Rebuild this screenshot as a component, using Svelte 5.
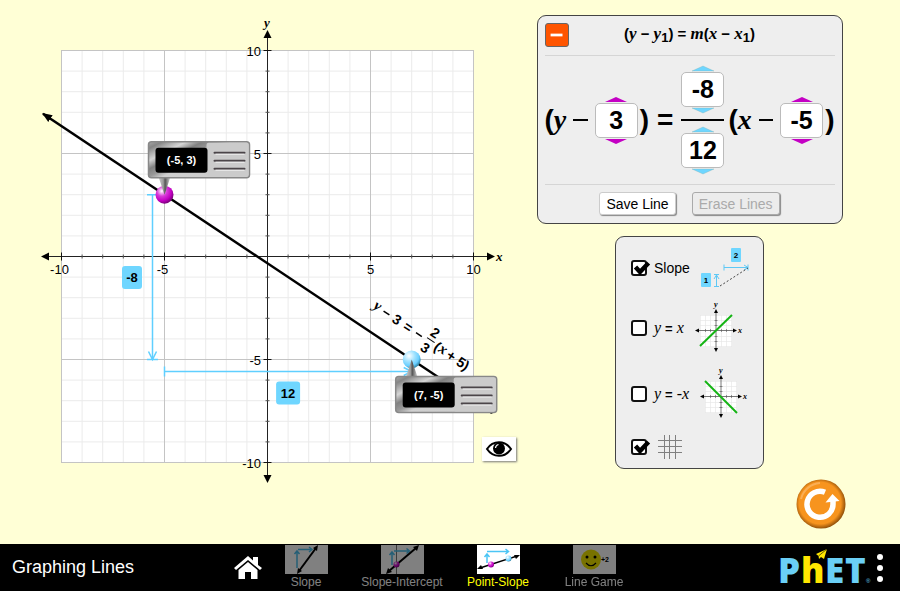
<script>
	let x1 = $state(-5);
	let y1 = $state(3);
	let rise = $state(-8);
	let run = $state(12);
	let savedLines = $state([]);
	let expanded = $state(true);
	let linesVisible = $state(true);
	let activeScreen = $state('Point-Slope');

	let showSlope = $state(true);
	let showYX = $state(false);
	let showYNegX = $state(false);
	let showGrid = $state(true);

	const UNIT = 20.6;
	const EXTENT = 10.9;
	const ticks = Array.from({ length: 21 }, (_, i) => i - 10);
	const screens = ['Slope', 'Slope-Intercept', 'Point-Slope', 'Line Game'];

	// Model to view coordinates
	const px = (x) => 267.5 + x * UNIT;
	const py = (y) => 256.5 - y * UNIT;

	function gcd(a, b) {
		return b === 0 ? Math.abs(a) || 1 : gcd(b, a % b);
	}

	// Ends of a line, where it leaves the square just outside the grid
	function lineEnds(x, y, dx, dy) {
		if (dx === 0 && dy === 0) return null;
		const limit = (p, d, sign) => (d === 0 ? sign * Infinity : (sign * Math.sign(d) * EXTENT - p) / d);
		const far = Math.min(limit(x, dx, 1), limit(y, dy, 1));
		const near = Math.max(limit(x, dx, -1), limit(y, dy, -1));
		return {
			x1: px(x + dx * near),
			y1: py(y + dy * near),
			x2: px(x + dx * far),
			y2: py(y + dy * far)
		};
	}

	let x2 = $derived(x1 + run);
	let y2 = $derived(y1 + rise);
	let ends = $derived(lineEnds(x1, y1, run, rise));
	let angle = $derived((Math.atan2(-rise, run) * 180) / Math.PI);
	let divisor = $derived(gcd(rise, run));
	let negative = $derived(rise * run < 0);
	let midY = $derived((py(y1) + py(y2)) / 2);
	let midX = $derived((px(x1) + px(x2)) / 2);
	let headY = $derived(8 * Math.sign(rise));

	function reset() {
		x1 = -5;
		y1 = 3;
		rise = -8;
		run = 12;
		savedLines = [];
		expanded = true;
		linesVisible = true;
		showSlope = true;
		showYX = false;
		showYNegX = false;
		showGrid = true;
	}
</script>

{#snippet picker(value, change, kind, label)}
	<span class="picker {kind}">
		<button aria-label="Increase {label}" onclick={() => change(1)}>
			<svg viewBox="0 0 22 5"><path d="M0 5 L11 0 L22 5 Z" /></svg>
		</button>
		<output aria-label={label}>{value}</output>
		<button aria-label="Decrease {label}" onclick={() => change(-1)}>
			<svg viewBox="0 0 22 5"><path d="M0 0 L11 5 L22 0 Z" /></svg>
		</button>
	</span>
{/snippet}

{#snippet readout(x, y, text, up)}
	<!-- point tool: the probe tip sits on the point -->
	<g transform="translate({x} {y})">
		<path d={up ? 'M0 0 L6 18 H-6 Z' : 'M0 0 L6 -18 H-6 Z'} fill="url(#probe)" />
		<g transform="translate(-17 {up ? 16 : -54})">
			<rect x="1" y="1" width="101" height="36" rx="3" fill="url(#metal)" stroke="#888" stroke-width="1.500" />
			<rect x="59" y="2" width="42" height="34" rx="2" fill="#cbcbcb" />
			<rect x="8" y="7" width="52" height="25" rx="3" fill="#000" />
			<path d="M67 12 H97 M67 20 H97 M67 28 H97" stroke="#4b4549" stroke-width="2" stroke-linecap="round" />
			<path d="M68 13.500 H97 M68 21.500 H97 M68 29.500 H97" stroke="#f2f2f2" />
			<text class="bold" x="34" y="23" font-size="11" fill="#fff" text-anchor="middle">{text}</text>
		</g>
	</g>
{/snippet}

{#snippet checkmark()}
	<svg class="check" viewBox="0 0 20 17" aria-hidden="true">
		<path d="M4.500 7 L9 12 L17.500 3" fill="none" stroke="#000" stroke-width="4.500" />
	</svg>
{/snippet}

{#snippet lineIcon(d)}
	<svg class="line-icon" viewBox="0 0 50 50" aria-hidden="true">
		<rect x="5" y="12" width="32" height="32" fill="#fff" />
		<path d="M5 12.500 H37 M5 17.500 H37 M5 22.500 H37 M5 33.500 H37 M5 38.500 H37 M5 43.500 H37 M5.500 12 V44 M10.500 12 V44 M15.500 12 V44 M26.500 12 V44 M31.500 12 V44 M36.500 12 V44" stroke="#e4e4e4" stroke-width="0.600" />
		<path d="M2 27.500 H40 M21 9 V46" stroke="#555" stroke-width="0.800" />
		<path d="M10.500 26 v3 M15.500 26 v3 M26.500 26 v3 M31.500 26 v3 M19.500 17.500 h3 M19.500 22.500 h3 M19.500 33.500 h3 M19.500 38.500 h3" stroke="#555" stroke-width="0.600" />
		<path d="M0 27.500 l4 -2 v4 Z M42 27.500 l-4 -2 v4 Z M21 6 l2 4 h-4 Z M21 49 l2 -4 h-4 Z" />
		<path {d} stroke="#14b414" stroke-width="2" />
		<text class="var" x="19" y="4" font-size="8">y</text>
		<text class="var" x="43" y="30" font-size="8">x</text>
	</svg>
{/snippet}

<div class="sim">
	<main>
		<section class="graph">
			<svg viewBox="0 0 537 500" role="img" aria-label="Graph of the line">
				<defs>
					<linearGradient id="metal" x1="0" y1="0" x2="1" y2="0.700">
						<stop offset="0" stop-color="#aaa" />
						<stop offset="0.090" stop-color="#858585" />
						<stop offset="0.160" stop-color="#aaa" />
						<stop offset="0.250" stop-color="#d5d5d5" />
						<stop offset="0.360" stop-color="#808080" />
						<stop offset="0.460" stop-color="#999" />
						<stop offset="0.550" stop-color="#d0d0d0" />
						<stop offset="1" stop-color="#ccc" />
					</linearGradient>
					<linearGradient id="probe">
						<stop offset="0" stop-color="#ccc" />
						<stop offset="0.400" stop-color="#999" />
						<stop offset="0.550" stop-color="#555" />
						<stop offset="1" stop-color="#ddd" />
					</linearGradient>
					<radialGradient id="magenta" cx="0.350" cy="0.300" r="0.700">
						<stop offset="0" stop-color="#fff" />
						<stop offset="0.400" stop-color="#d83bd8" />
						<stop offset="0.750" stop-color="#c400c4" />
						<stop offset="1" stop-color="#800080" />
					</radialGradient>
					<radialGradient id="blue" cx="0.350" cy="0.300" r="0.700">
						<stop offset="0" stop-color="#fff" />
						<stop offset="0.450" stop-color="#a3e3ff" />
						<stop offset="0.800" stop-color="#69ceff" />
						<stop offset="1" stop-color="#368caf" />
					</radialGradient>
					<marker id="arrow" viewBox="0 0 10 8" refX="9" refY="4" markerWidth="10" markerHeight="8" markerUnits="userSpaceOnUse" orient="auto-start-reverse">
						<path d="M0 0 L10 4 L0 8 Z" />
					</marker>
				</defs>

				<rect x={px(-10)} y={py(10)} width={UNIT * 20} height={UNIT * 20} fill="#fff" stroke="#bbb" />
				{#if showGrid}
					{#each ticks.filter((t) => t % 5) as t}
						<path d="M{px(t)} {py(10)} V{py(-10)} M{px(-10)} {py(t)} H{px(10)}" stroke="#ebebeb" />
					{/each}
					{#each [-10, -5, 5, 10] as t}
						<path d="M{px(t)} {py(10)} V{py(-10)} M{px(-10)} {py(t)} H{px(10)}" stroke="#c4c4c4" />
					{/each}
				{/if}

				<!-- axes -->
				<path d="M46 256.500 H490 M267.500 34 V478" stroke="#222" />
				<path d="M41 256.500 l8 -4 v8 Z M495 256.500 l-8 -4 v8 Z M267.500 30 l4 8 h-8 Z M267.500 483 l4 -8 h-8 Z" />
				{#each ticks.filter((t) => t !== 0) as t}
					{@const size = t % 5 ? 2 : 4}
					<path d="M{px(t)} {256.5 - size} v{size * 2} M{267.5 - size} {py(t)} h{size * 2}" stroke={t % 5 ? '#555' : '#111'} />
				{/each}
				{#each [-10, -5, 5, 10] as t}
					<text x={t < 0 ? px(t) - 2 : px(t)} y="274" font-size="13" text-anchor="middle">{t}</text>
					<text x="261" y={py(t) + 5} font-size="13" text-anchor="end">{t}</text>
				{/each}
				<text class="var" x="264" y="27" font-size="13">y</text>
				<text class="var" x="496" y="261" font-size="13">x</text>

				{#if linesVisible}
					{#if showYX}
						<path d="M{px(-10)} {py(-10)} L{px(10)} {py(10)}" stroke="#14b414" stroke-width="2" />
					{/if}
					{#if showYNegX}
						<path d="M{px(-10)} {py(10)} L{px(10)} {py(-10)}" stroke="#14b414" stroke-width="2" />
					{/if}
					{#each savedLines as line}
						<line {...line} stroke="#777" stroke-width="2" />
					{/each}
					{#if ends}
						<line {...ends} stroke="#000" stroke-width="2.500" marker-start="url(#arrow)" marker-end="url(#arrow)" />
					{/if}

					<!-- line equation, drawn parallel to the line near the second point -->
					<g class="bold" font-size="14" transform="translate({px(x2) - 37} {py(y2) - 55}) rotate({angle})">
						<text class="var" x="0" y="4" font-size="15">y</text>
						<path d="M11 0.500 h7" stroke="#000" stroke-width="1.500" />
						<text x="23" y="5">{y1}</text>
						<text x="36" y="5">=</text>
						{#if negative}<path d="M50 0.500 h7" stroke="#000" stroke-width="1.500" />{/if}
						<text x="66" y="-5" text-anchor="middle">{Math.abs(rise / divisor)}</text>
						<path d="M62 -1.500 h9" stroke="#000" />
						<text x="66" y="13" text-anchor="middle">{Math.abs(run / divisor)}</text>
						<text x="73" y="5">(</text>
						<text class="var" x="78" y="4" font-size="15">x</text>
						<text x="88" y="5">{x1 > 0 ? '-' : '+'}</text>
						<text x="100" y="5">{Math.abs(x1)})</text>
					</g>
				{/if}

				{#if showSlope && linesVisible}
					<g fill="none" stroke="#5fcfff" stroke-width="1.500">
						<path d="M152.500 {py(y1)} V{py(y2)} M147 {py(y1)} h11 M147 {py(y2)} h11" />
						<path d="M148.500 {py(y2) + headY} l4 {-headY} l4 {headY}" />
						<path d="M{px(x1)} {py(y2) + 12} H{px(x2)} m0 -5 v10 M{px(x1)} {py(y2) + 7} v10" />
						<path d="M{px(x2) - 8} {py(y2) + 8} l8 4 l-8 4" />
					</g>
					<rect x="122" y={midY - 11} width="20" height="23" rx="3" fill="#6fd6ff" />
					<text class="bold" x="132" y={midY + 5} font-size="13" text-anchor="middle">{rise}</text>
					<rect x={midX - 12} y={py(y2) + 22} width="24" height="23" rx="3" fill="#6fd6ff" />
					<text class="bold" x={midX} y={py(y2) + 38} font-size="13" text-anchor="middle">{run}</text>
				{/if}

				<circle cx={px(x1)} cy={py(y1)} r="9" fill="url(#magenta)" />
				<circle cx={px(x2)} cy={py(y2)} r="9" fill="url(#blue)" />
				{@render readout(px(x1), py(y1), `(${x1}, ${y1})`, false)}
				{@render readout(px(x2), py(y2), `(${x2}, ${y2})`, true)}
			</svg>

			<button class="eye" aria-label="Show or hide lines" onclick={() => (linesVisible = !linesVisible)}>
				<svg viewBox="0 0 28 18">
					<path d="M2 9 C8 0 20 0 26 9 C20 18 8 18 2 9 Z" fill="#fff" stroke="#000" stroke-width="2" />
					<circle cx="14" cy="8.500" r="6" />
					<path d="M10.500 8 a4 4 0 0 1 3 -3.500" fill="none" stroke="#fff" stroke-width="1.200" />
				</svg>
			</button>
		</section>

		<aside>
			<section class="panel equation-panel">
				<header>
					<button class="collapse" aria-label="Toggle equation" onclick={() => (expanded = !expanded)}>
						<svg viewBox="0 0 24 24"><path d={expanded ? 'M5 12 H18' : 'M5 12 H18 M11.500 5 V19'} stroke="#fff" stroke-width="3" /></svg>
					</button>
					<h2>(<i>y</i> − <i>y</i><sub>1</sub>) = <i>m</i>(<i>x</i> − <i>x</i><sub>1</sub>)</h2>
				</header>
				{#if expanded}
					<div class="equation">
						<span class="group">(<i>y</i></span>
						<span class="minus"></span>
						{@render picker(y1, (d) => (y1 += d), 'point', 'y1')}
						<span class="close">)</span>
						<span class="equals">=</span>
						<span class="fraction">
							{@render picker(rise, (d) => (rise += d), 'slope', 'rise')}
							<span class="bar"></span>
							{@render picker(run, (d) => (run += d), 'slope', 'run')}
						</span>
						<span class="group">(<i>x</i></span>
						<span class="minus"></span>
						{@render picker(x1, (d) => (x1 += d), 'point', 'x1')}
						<span class="close">)</span>
					</div>
					<div class="actions">
						<button onclick={() => (savedLines = [...savedLines, ends])}>Save Line</button>
						<button disabled={savedLines.length === 0} onclick={() => (savedLines = [])}>Erase Lines</button>
					</div>
				{/if}
			</section>

			<section class="panel options">
				<label>
					<span class="box"><input type="checkbox" bind:checked={showSlope} />{#if showSlope}{@render checkmark()}{/if}</span>
					<span>Slope</span>
					<svg class="slope-icon" viewBox="0 0 48 39" aria-hidden="true">
						<rect x="30" y="0" width="10" height="14" rx="1" fill="#6fd6ff" />
						<rect x="0" y="25" width="10" height="14" rx="1" fill="#6fd6ff" />
						<text class="bold" x="35" y="10" font-size="8" text-anchor="middle">2</text>
						<text class="bold" x="5" y="35" font-size="8" text-anchor="middle">1</text>
						<path d="M23 19.500 H47 M23 16.500 v6 M47 16.500 v6 M43 17 l4 2.500 l-4 2.500 M15.500 27 V38.500 M13 26.500 h5 M13 38.500 h5 M13 31 l2.500 -4 l2.500 4" fill="none" stroke="#5fc8f5" />
						<path d="M19 38 L47 20" stroke="#444" stroke-dasharray="2 2" />
					</svg>
				</label>
				<label>
					<span class="box"><input type="checkbox" bind:checked={showYX} />{#if showYX}{@render checkmark()}{/if}</span>
					<span class="formula">y <b>=</b> x</span>
					{@render lineIcon('M5 43 L37 12')}
				</label>
				<label>
					<span class="box"><input type="checkbox" bind:checked={showYNegX} />{#if showYNegX}{@render checkmark()}{/if}</span>
					<span class="formula">y <b>=</b> -x</span>
					{@render lineIcon('M5 12 L37 44')}
				</label>
				<label aria-label="Grid">
					<span class="box"><input type="checkbox" bind:checked={showGrid} />{#if showGrid}{@render checkmark()}{/if}</span>
					<svg class="grid-icon" viewBox="0 0 24 24" aria-hidden="true">
						<path d="M0 5.500 H24 M0 11.500 H24 M0 17.500 H24 M6.500 0 V24 M11.500 0 V24 M17.500 0 V24" stroke="#808080" />
					</svg>
				</label>
			</section>

			<button class="reset" aria-label="Reset all" onclick={reset}>
				<svg viewBox="0 0 50 50">
					<defs>
						<radialGradient id="orange" cx="0.480" cy="0.480" r="0.520">
							<stop offset="0.820" stop-color="#f7941e" />
							<stop offset="1" stop-color="#94520a" />
						</radialGradient>
					</defs>
					<circle cx="25" cy="25" r="24.500" fill="url(#orange)" />
					<path d="M5 20 A21 21 0 0 1 24 4" fill="none" stroke="#fbc07a" stroke-width="2" opacity="0.600" />
					<path d="M29 13.300 A13 13 0 1 0 37 25 V21" fill="none" stroke="#fff" stroke-width="5.500" />
					<path d="M29.500 23.500 L36.500 15 L43.500 22 Z" fill="#fff" />
				</svg>
			</button>
		</aside>
	</main>

	<nav>
		<h1>Graphing Lines</h1>
		<div class="screens">
			<button class="home" aria-label="Home">
				<svg viewBox="0 0 28 24">
					<path d="M0 12 L14 0 L19 4.500 V1 H24 V9 L28 12 L26 14 L14 4 L2 14 Z" fill="#fff" />
					<path d="M4.500 14 L14 6 L23.500 14 V23 H17 V16 H11 V23 H4.500 Z" fill="#fff" />
				</svg>
			</button>
			<div class="tabs">
				{#each screens as screen}
					<button class="tab" class:active={screen === activeScreen} onclick={() => (activeScreen = screen)}>
						<svg viewBox="0 0 43 29" aria-hidden="true">
							<rect width="43" height="29" fill="#fff" />
							{#if screen === 'Slope'}
								<path d="M12 23 V7 M9.500 9 l2.500 -3 l2.500 3 M13 4.500 H26 M24 2 l3 2.500 l-3 2.500" fill="none" stroke="#4bbdec" stroke-width="1.500" />
								<path d="M14 26 L31 3" stroke="#000" stroke-width="2" />
								<path d="M12 29 l1 -6 l4 3 Z M33 0 l-1 6 l-4 -3 Z" />
							{:else if screen === 'Slope-Intercept'}
								<path d="M15.500 0 V29" stroke="#777" />
								<path d="M11 20 V7 M8.500 10 l2.500 -3 l2.500 3 M13 6 H28 M25.500 3.500 l3 2.500 l-3 2.500" fill="none" stroke="#4bbdec" stroke-width="1.500" />
								<path d="M8 26 L35 3" stroke="#000" stroke-width="2" />
								<path d="M5 29 l2 -6 l4 4 Z M38 0 l-6 2 l4 4 Z" />
								<circle cx="15.500" cy="19.500" r="3" fill="url(#magenta)" />
							{:else if screen === 'Point-Slope'}
								<path d="M10 18 V9 M7.500 12 l2.500 -3 l2.500 3 M10 6.500 H31 M28.500 4 l3 2.500 l-3 2.500" fill="none" stroke="#4bc5f5" stroke-width="1.500" />
								<path d="M3 23 L40 11" stroke="#000" stroke-width="1.500" />
								<path d="M0 24 l4 -4 l2 4 Z M43 10 l-4 4 l-2 -4 Z" />
								<circle cx="14" cy="19.500" r="3" fill="url(#magenta)" />
								<circle cx="31.500" cy="13.500" r="3" fill="url(#blue)" />
							{:else}
								<circle cx="18" cy="14.500" r="10" fill="#f0e500" />
								<circle cx="14" cy="12" r="1.500" />
								<circle cx="22" cy="12" r="1.500" />
								<path d="M13 18 Q18 23.500 23 18" fill="none" stroke="#000" stroke-width="1.200" />
								<text class="bold" x="28" y="17" font-size="7">+2</text>
							{/if}
						</svg>
						<span>{screen}</span>
					</button>
				{/each}
			</div>
		</div>
		<a class="logo" href="#phet" aria-label="PhET">
			<svg viewBox="0 0 90 38">
				<text class="brand" x="-2" y="34" font-size="35" fill="#6acff6">P</text>
				<text class="brand" x="21" y="34" font-size="35" fill="#ffe600">h</text>
				<text class="brand" x="45" y="34" font-size="35" fill="#6acff6">E</text>
				<text class="brand" x="65" y="34" font-size="35" fill="#6acff6">T</text>
				<path d="M36 5 L47 0 L44 10 L41 8 L39 10 L38.500 7 Z" fill="#ffe600" />
				<path d="M47 0 L38.500 7" stroke="#000" stroke-width="0.600" />
				<text x="86" y="34" font-size="6" fill="#6acff6">®</text>
			</svg>
		</a>
		<button class="menu" aria-label="Menu"><span></span><span></span><span></span></button>
	</nav>
</div>

<style>
	:global(body) {
		background: #ffffd6;
	}

	.sim {
		display: flex;
		flex-direction: column;
		min-height: 100vh;
		font-family: "Liberation Sans", Arial, sans-serif;
		color: #000;
	}

	svg {
		display: block;
		overflow: visible;
	}

	button {
		font: inherit;
		padding: 0;
		border: 0;
		background: none;
		cursor: pointer;
	}

	.bold {
		font-weight: bold;
	}

	.var, i {
		font-family: "Liberation Serif", "Times New Roman", serif;
		font-style: italic;
		font-weight: bold;
	}

	main {
		flex: 1;
		display: grid;
		grid-template-columns: minmax(0, 1fr) 309px;
		padding-right: 54px;
	}

	.graph {
		position: relative;
		align-self: start;
	}

	.graph > svg {
		width: 100%;
	}

	.eye {
		position: absolute;
		right: 21px;
		bottom: 39px;
		display: grid;
		place-items: center;
		width: 34px;
		height: 24px;
		background: #fff;
		box-shadow: 1px 1px 2px #777;
	}

	.eye svg {
		width: 28px;
	}

	aside {
		display: flex;
		flex-direction: column;
		align-items: center;
		padding: 15px 0;
	}

	.panel {
		box-sizing: border-box;
		margin-right: 4px;
		background: #eee;
		border: 1px solid #444;
		border-radius: 9px;
	}

	.equation-panel {
		width: 306px;
		padding: 7px;
		margin-bottom: 12px;
	}

	header {
		display: grid;
		grid-template-columns: 24px 1fr 24px;
		align-items: center;
		padding-bottom: 8px;
		border-bottom: 1px solid #d5d5d5;
	}

	.collapse {
		width: 24px;
		height: 24px;
		background: #ff5500;
		border: 1px solid #666;
		border-radius: 3px;
	}

	h2 {
		margin: 0 0 2px;
		font-size: 15px;
		line-height: 20px;
		text-align: center;
	}

	h2 i {
		font-size: 17px;
	}

	sub {
		font-size: 13px;
		line-height: 0;
		vertical-align: -3px;
	}

	.equation {
		display: flex;
		align-items: center;
		height: 128px;
		font-size: 28px;
		font-weight: bold;
		line-height: 32px;
	}

	.equation i {
		font-size: 28px;
	}

	.minus {
		width: 15px;
		height: 2px;
		margin: 0 7px;
		background: #000;
	}

	.close {
		margin-left: 2px;
	}

	.equals {
		margin: 0 8px;
	}

	.fraction {
		display: flex;
		flex-direction: column;
		align-items: center;
		gap: 6px;
		margin-right: 4px;
	}

	.bar {
		width: 43px;
		height: 2px;
		background: #000;
	}

	.picker {
		display: flex;
		flex-direction: column;
		align-items: center;
		gap: 1px;
	}

	.picker button {
		width: 22px;
		height: 5px;
	}

	.picker output {
		box-sizing: border-box;
		width: 43px;
		height: 35px;
		background: #fff;
		border: 1px solid #bbb;
		border-radius: 5px;
		font-size: 25px;
		line-height: 33px;
		text-align: center;
	}

	.picker.point path {
		fill: #c400c4;
	}

	.picker.slope path {
		fill: #6fd6ff;
		stroke: #7aa;
		stroke-width: 0.3;
	}

	.actions {
		display: flex;
		justify-content: center;
		gap: 16px;
		padding: 7px 0 1px;
		border-top: 1px solid #d5d5d5;
	}

	.actions button {
		height: 23px;
		padding: 0 6px;
		background: #fff;
		border: 1px solid #ccc;
		border-radius: 3px;
		box-shadow: 1px 1px 1px #888;
		color: #000;
		font-size: 14px;
	}

	.actions button:disabled {
		background: #ececec;
		border-color: #aaa;
		color: #aaa;
	}

	.options {
		display: flex;
		flex-direction: column;
		gap: 16px;
		width: 149px;
		padding: 11px 14px 9px 15px;
	}

	.options label {
		display: flex;
		align-items: center;
		gap: 7px;
		font-size: 14px;
		white-space: nowrap;
	}

	.box {
		position: relative;
		height: 16px;
	}

	.box input {
		display: block;
		appearance: none;
		box-sizing: border-box;
		width: 16px;
		height: 16px;
		margin: 0;
		background: #fff;
		border: 2px solid #111;
		border-radius: 3px;
	}

	.check {
		position: absolute;
		left: 0;
		top: 0;
		width: 20px;
		pointer-events: none;
	}

	.formula {
		font-family: "Liberation Serif", "Times New Roman", serif;
		font-size: 16px;
		font-style: italic;
	}

	.formula b {
		font-family: "Liberation Sans", Arial, sans-serif;
		font-size: 13px;
		font-style: normal;
	}

	.slope-icon {
		width: 48px;
		margin-left: auto;
	}

	.line-icon {
		width: 50px;
		margin-left: 4px;
	}

	.grid-icon {
		width: 24px;
		margin-left: 4px;
	}

	.reset {
		align-self: flex-end;
		width: 50px;
		height: 50px;
		margin-top: auto;
	}

	nav {
		display: flex;
		align-items: center;
		height: 47px;
		padding: 0 16px 0 12px;
		background: #000;
	}

	h1 {
		flex: 1;
		margin: 0;
		color: #fff;
		font-size: 18px;
		font-weight: normal;
		white-space: nowrap;
	}

	.screens {
		display: flex;
		align-items: center;
		margin-right: 10px;
	}

	.home svg {
		width: 28px;
	}

	.tabs {
		display: flex;
		gap: 8px;
	}

	.tab {
		display: flex;
		flex-direction: column;
		align-items: center;
		gap: 1px;
		width: 88px;
		color: #fff;
		font-size: 12px;
		line-height: 15px;
		white-space: nowrap;
		opacity: 0.5;
	}

	.tab svg {
		width: 43px;
	}

	.tab.active {
		color: #ffff00;
		opacity: 1;
	}

	.logo {
		display: flex;
		flex: 1;
		justify-content: flex-end;
		margin-right: 6px;
	}

	.logo svg {
		width: 90px;
	}

	.brand {
		font-family: "Open Sans", "Liberation Sans", sans-serif;
		font-weight: 800;
	}

	.menu {
		display: flex;
		flex-direction: column;
		align-items: center;
		gap: 5px;
		width: 8px;
	}

	.menu span {
		width: 6px;
		height: 6px;
		background: #fff;
		border-radius: 50%;
	}
</style>
